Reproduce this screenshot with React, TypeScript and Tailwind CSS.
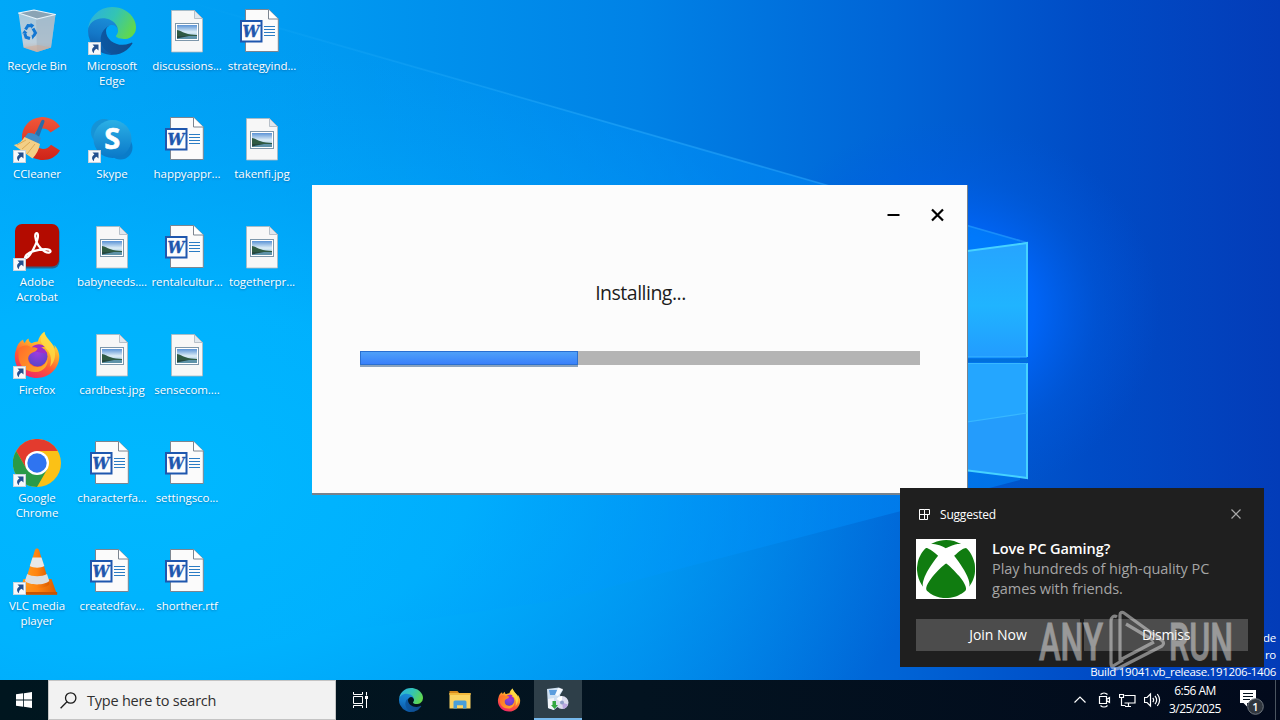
import type { ReactNode } from 'react';
import { FaXbox } from 'react-icons/fa';

type IconKind =
    | 'recycle' | 'edge' | 'image' | 'word' | 'ccleaner' | 'skype'
    | 'acrobat' | 'firefox' | 'chrome' | 'vlc';

interface Shortcut {
    label: string;
    icon: IconKind;
    link?: boolean;
}

const COLUMNS: Shortcut[][] = [
    [
        { label: 'Recycle Bin', icon: 'recycle' },
        { label: 'CCleaner', icon: 'ccleaner', link: true },
        { label: 'Adobe Acrobat', icon: 'acrobat', link: true },
        { label: 'Firefox', icon: 'firefox', link: true },
        { label: 'Google Chrome', icon: 'chrome', link: true },
        { label: 'VLC media player', icon: 'vlc', link: true },
    ],
    [
        { label: 'Microsoft Edge', icon: 'edge', link: true },
        { label: 'Skype', icon: 'skype', link: true },
        { label: 'babyneeds....', icon: 'image' },
        { label: 'cardbest.jpg', icon: 'image' },
        { label: 'characterfa...', icon: 'word' },
        { label: 'createdfav...', icon: 'word' },
    ],
    [
        { label: 'discussions...', icon: 'image' },
        { label: 'happyappr...', icon: 'word' },
        { label: 'rentalcultur...', icon: 'word' },
        { label: 'sensecom....', icon: 'image' },
        { label: 'settingsco...', icon: 'word' },
        { label: 'shorther.rtf', icon: 'word' },
    ],
    [
        { label: 'strategyind...', icon: 'word' },
        { label: 'takenfi.jpg', icon: 'image' },
        { label: 'togetherpr...', icon: 'image' },
    ],
];

/* ---------- Icons ---------- */

/** Gradients shared by every icon on the page */
function SharedDefs() {
    return (
        <svg width="0" height="0" className="absolute">
            <defs>
                <linearGradient id="edgeA" x1="0" y1="0" x2="1" y2="0">
                    <stop offset="0" stopColor="#0c59a4" />
                    <stop offset="1" stopColor="#114a8b" />
                </linearGradient>
                <linearGradient id="edgeB" x1="0.6" y1="0" x2="0.4" y2="1">
                    <stop offset="0" stopColor="#1b8fd8" />
                    <stop offset="0.5" stopColor="#1478c8" />
                    <stop offset="1" stopColor="#0b55a2" />
                </linearGradient>
                <linearGradient id="edgeC" x1="0" y1="0.2" x2="1" y2="0.6">
                    <stop offset="0" stopColor="#2bb0e0" />
                    <stop offset="0.5" stopColor="#33c4b4" />
                    <stop offset="1" stopColor="#62d84a" />
                </linearGradient>
                <linearGradient id="ffBody" x1="0.8" y1="0" x2="0.3" y2="1">
                    <stop offset="0" stopColor="#fff44f" />
                    <stop offset="0.35" stopColor="#ffb02a" />
                    <stop offset="0.65" stopColor="#ff5a36" />
                    <stop offset="1" stopColor="#f0246a" />
                </linearGradient>
                <radialGradient id="ffGlobe" cx="0.5" cy="0.3" r="0.7">
                    <stop offset="0" stopColor="#a03be0" />
                    <stop offset="1" stopColor="#5a45c8" />
                </radialGradient>
                <linearGradient id="ffHead" x1="0" y1="0" x2="1" y2="0.6">
                    <stop offset="0" stopColor="#ff6a2a" />
                    <stop offset="1" stopColor="#ffa928" />
                </linearGradient>
                <linearGradient id="skypeBg" x1="0" y1="0" x2="0" y2="1">
                    <stop offset="0" stopColor="#2bb0e6" />
                    <stop offset="1" stopColor="#0a78c8" />
                </linearGradient>
                <linearGradient id="ccRed" x1="0" y1="0" x2="0" y2="1">
                    <stop offset="0" stopColor="#f0573a" />
                    <stop offset="1" stopColor="#cf2318" />
                </linearGradient>
                <linearGradient id="binBody" x1="0" y1="0" x2="0" y2="1">
                    <stop offset="0" stopColor="#b4cbd9" />
                    <stop offset="0.75" stopColor="#cfd3d9" />
                    <stop offset="1" stopColor="#d6b8a9" />
                </linearGradient>
                <linearGradient id="photo" x1="0" y1="0" x2="0" y2="1">
                    <stop offset="0" stopColor="#5b93d6" />
                    <stop offset="0.5" stopColor="#dcedf6" />
                    <stop offset="1" stopColor="#7fb0cf" />
                </linearGradient>
                <linearGradient id="cone" x1="0" y1="0" x2="1" y2="0">
                    <stop offset="0" stopColor="#ff9a1e" />
                    <stop offset="0.5" stopColor="#ff8410" />
                    <stop offset="1" stopColor="#dc5c00" />
                </linearGradient>
            </defs>
        </svg>
    );
}

function EdgeIcon({ size = 48 }: { size?: number }) {
    return (
        <svg width={size} height={size} viewBox="0 0 256 256">
            <g transform="translate(-4.63 -4.92)">
                <path fill="url(#edgeA)" d="M235.68 195.46a93.73 93.73 0 0 1-10.54 4.71 101.87 101.87 0 0 1-35.9 6.46c-47.32 0-88.54-32.55-88.54-74.32A31.48 31.48 0 0 1 117.13 105c-42.8 1.8-53.8 46.4-53.8 72.53 0 73.88 68.09 81.37 82.76 81.37 7.91 0 19.84-2.3 27-4.56l1.31-.44a128.34 128.34 0 0 0 66.6-52.8 4 4 0 0 0-5.32-5.64Z" />
                <path fill="url(#edgeB)" d="M110.34 246.34A79.2 79.2 0 0 1 87.6 225a80.72 80.72 0 0 1 29.53-120c3.12-1.47 8.45-4.13 15.54-4a32.35 32.35 0 0 1 25.69 13 31.88 31.88 0 0 1 6.36 18.66c0-.21 24.46-79.6-80-79.6-43.9 0-80 41.66-80 78.21a130.15 130.15 0 0 0 12.11 56 128 128 0 0 0 156.38 67.11 75.55 75.55 0 0 1-62.78-8Z" />
                <path fill="url(#edgeC)" d="M156.94 153.78c-.81 1.05-3.3 2.5-3.3 5.66 0 2.61 1.7 5.12 4.72 7.23 14.38 10 41.49 8.68 41.56 8.68a59.56 59.56 0 0 0 30.27-8.35 61.38 61.38 0 0 0 30.43-52.88c.26-22.41-8-37.31-11.34-43.91-21.19-41.45-66.93-65.29-116.67-65.29a128 128 0 0 0-128 126.2c.48-36.54 36.8-66.05 80-66.05 3.5 0 23.46.34 42 10.07 16.34 8.58 24.9 18.94 30.85 29.21 6.18 10.67 7.28 24.15 7.28 29.52s-2.74 13.33-7.8 19.91Z" />
            </g>
        </svg>
    );
}

function FirefoxIcon({ size = 48 }: { size?: number }) {
    return (
        <svg width={size} height={size} viewBox="0 0 48 48">
            <path fill="url(#ffBody)" d="M46 23c-.8-4.300-2.800-7.300-5-9.300.6 1.500 1 3 1.100 4C40 12.500 36 10.300 33.500 6.200 32.200 4 31.600 2.800 31.400.8c-3.600 2.200-5.900 6.500-6.500 9.800-2.200.1-4.200.7-6 1.600-1.700-.2-3.400-1.700-3.300-4.600-1.900 1-3 2.400-3.700 4.300-1.200-.8-1.800-2-1.800-3.300C6 11 3.700 15 3 19c-.7 1.900-1.200 4.200-1.200 6.500C1.800 37.800 11.600 47 24 47s22.300-9.700 22.300-21.700c0-.8-.1-1.500-.3-2.300Z" />
            <circle cx="24.500" cy="25.500" r="10" fill="url(#ffGlobe)" />
            <path fill="#a22cc6" d="M19 16c4-3.500 10-3.700 13.500.3-2-.6-3.500-.4-4.600.4 3 .9 5.300 3 6.300 6L19 20Z" />
            <path fill="url(#ffHead)" d="M5.500 17.500c4.500-3.800 9.500-3.800 12.500-1.100 2.400-.5 4.800 0 6.700 1.200-1 2.800-3.800 3.200-6.700 5-1.700 1.100-2.800 3-2.800 5.200 0 5.500 5 8.400 9.500 8.200 5.800-.2 9.300-4.500 9.600-9 1.900 6.700-3.300 14-12 14-9.800 0-16.500-6.500-16.800-15.500-.1-3 0-5.500 0-8Z" />
            <path fill="#ffdc45" opacity=".8" d="M31.400.8c.8 6 7.800 9.500 10 17.500 2 7.600-.8 14-4.400 17.500 2-6.500 1.200-12.700-3.200-17.600-3.600-3.900-6.300-6.200-6-9.700.3-3 2-5.800 3.600-7.700Z" />
        </svg>
    );
}

function WordIcon() {
    return (
        <svg width="48" height="48" viewBox="0 0 48 48">
            <path d="M7.500 2.500h23.300l9.500 9.500v32.500H7.500Z" fill="#fbfbfb" stroke="#7c8590" />
            <path d="M30.500 2.500v9.500h9.800" fill="#fff" stroke="#7c8590" />
            <path d="M26 19.500h11M26 22.500h11M26 25.500h11M26 28.500h11" stroke="#2b7cc4" />
            <rect x="3" y="14" width="20.500" height="20.500" fill="#fdfdfd" stroke="#1f57ae" strokeWidth="2" />
            <text x="13" y="30.300" textAnchor="middle" textLength="17" lengthAdjust="spacingAndGlyphs" fill="#1f57ae" stroke="#1f57ae" strokeWidth=".4" fontFamily="'DejaVu Serif', serif" fontWeight="700" fontStyle="italic" fontSize="17">W</text>
        </svg>
    );
}

function ImageIcon() {
    return (
        <svg width="48" height="48" viewBox="0 0 48 48">
            <path d="M8.500 3.500h23l8 8v33.500h-31Z" fill="#f7f7f7" stroke="#b3b8bd" strokeWidth=".8" />
            <path d="M31.500 3.500v8h8Z" fill="#dfe7ee" stroke="#a9b4be" strokeWidth=".8" />
            <rect x="12.500" y="16.500" width="23" height="17" fill="#fff" stroke="#7d97ab" />
            <rect x="14" y="18" width="20" height="14" fill="url(#photo)" />
            <path d="M14 23c3 .5 5 2 8 3 4 1.500 8 1.600 12 2v1H14Z" fill="#2f5a43" />
            <path d="M14 29h20v3H14Z" fill="#5f93a9" />
            <path d="M14 29h12l-12 2.500Z" fill="#26483f" />
        </svg>
    );
}

function RecycleIcon() {
    return (
        <svg width="48" height="48" viewBox="0 0 48 48">
            <path d="M5.500 6 23 11.500 42.500 7.500 38 40.500 24 45 10.500 40.500Z" fill="url(#binBody)" opacity=".92" />
            <path d="M23 11.500 42.500 7.500 38 40.500 24 45Z" fill="#9fb1bf" opacity=".55" />
            <path d="M5.500 6 21 3l21.500 4.500L24 12Z" fill="#8aa4b5" stroke="#eaf4fa" strokeWidth="1.200" strokeLinejoin="round" />
            <path d="M10.500 40.500 24 45l14-4.500-13-2.500Z" fill="#cfa996" opacity=".5" />
            <g fill="none" stroke="#1377d2" strokeWidth="3">
                <path d="m12.500 22.500 2.500-4 3.500.3" />
                <path d="m20 21.500 2.500 4.500-2 3" />
                <path d="m17 31.500-4-1.200-1.300-4" />
            </g>
            <path fill="#1377d2" d="m17.500 16 3.800 2.300-3 3.500ZM22.500 28l-4 .3 1 4.200ZM9 26.500l2.500-3.500 3 3Z" />
        </svg>
    );
}

function CCleanerIcon() {
    return (
        <svg width="48" height="48" viewBox="0 0 48 48">
            <path d="M47 11.500C42.500 5 35 1.500 27.500 2.200 16.500 3 8.500 12 9 23.500 9.500 36 18.500 45 30 45c7 0 13-3 17-9.500l-9-5.800c-2 2.800-4.700 4.200-8 4.200-5.500 0-9-4.300-9-10.300 0-6 3.600-10.200 8.800-10.200 3.300 0 5.900 1.400 7.700 4Z" fill="url(#ccRed)" />
            <path d="M28.500 5.500c1-1.400 3.300-.6 3 1.200l-6.500 18-4.500-2Z" fill="#2b6ca8" />
            <path d="M15 18c4-.5 9 1.500 13 5l-2.500 6-14-6.500Z" fill="#3d8cc9" />
            <path d="M11.500 22 27 29c-1 5.500-3.500 10.500-7.500 14.500L.8 30c5-1 8.500-4 10.700-8Z" fill="#f3cf86" />
            <path d="m4 30 9-5M9 34l8-7M14 39l8-10" stroke="#dba955" fill="none" />
        </svg>
    );
}

function SkypeIcon() {
    return (
        <svg width="48" height="48" viewBox="0 0 48 48">
            <circle cx="16" cy="17" r="13" fill="#1693d6" />
            <circle cx="32.500" cy="32.500" r="12" fill="#0a7cc9" />
            <circle cx="24.500" cy="24" r="19" fill="url(#skypeBg)" />
            <text x="24.300" y="33.500" textAnchor="middle" fill="#fff" stroke="#fff" strokeWidth=".6" fontFamily="'Open Sans', sans-serif" fontWeight="700" fontSize="29">S</text>
        </svg>
    );
}

function AcrobatIcon() {
    return (
        <svg width="48" height="48" viewBox="0 0 48 48">
            <rect x="2.500" y="2.500" width="44" height="43" rx="7" fill="#5c0a08" opacity=".45" />
            <rect x="2" y="1" width="44" height="42.500" rx="7" fill="#b30b00" />
            <path
                d="M12 34.500c1-3.500 7-6.500 14-7.700 6-1 11-.5 11.500 1.200.4 1.700-2.500 2.300-5.500.8-4.500-2.200-9.500-9-9.800-15.300-.1-4.200 2.800-4.500 2.800-.8 0 4.500-4.500 14.500-8.300 19.300-2.200 2.800-5.200 4.500-4.700 2.500Z"
                fill="none"
                stroke="#fff"
                strokeWidth="2.200"
                strokeLinejoin="round"
            />
        </svg>
    );
}

function ChromeIcon() {
    return (
        <svg width="48" height="48" viewBox="0 0 48 48">
            <circle cx="24" cy="24" r="24" fill="#fbc116" />
            <path d="M24 12h20.800A24 24 0 0 0 3.200 12l10.400 18Z" fill="#e33b2e" />
            <path d="M3.200 12A24 24 0 0 0 24 48l10.400-18L24 36 13.600 30Z" fill="#2a9a48" />
            <circle cx="24" cy="24" r="12" fill="#fff" />
            <circle cx="24" cy="24" r="9.700" fill="#2f74f0" />
        </svg>
    );
}

function VlcIcon() {
    return (
        <svg width="48" height="48" viewBox="0 0 48 48">
            <path d="M10.500 32h28l5.500 15.500H5.500Z" fill="url(#cone)" />
            <path d="M5.500 45h38.700v2.800H5.500Z" fill="#c95300" />
            <path d="M21.800 3.500c.8-2.600 3.600-2.600 4.400 0L36.500 37c-3 5.500-22 5.500-25 0Z" fill="url(#cone)" />
            <path d="M19.500 10.500h9l2.800 8.500c-3.500 2.300-11 2.300-14.500 0Z" fill="#e8e8e8" />
            <path d="M14.200 27c5 3 14.800 3 19.800 0l2.300 7c-4.500 4.500-20.200 4.500-24.400 0Z" fill="#dedede" />
        </svg>
    );
}

const ICONS: Record<IconKind, () => ReactNode> = {
    recycle: RecycleIcon,
    edge: EdgeIcon,
    image: ImageIcon,
    word: WordIcon,
    ccleaner: CCleanerIcon,
    skype: SkypeIcon,
    acrobat: AcrobatIcon,
    firefox: FirefoxIcon,
    chrome: ChromeIcon,
    vlc: VlcIcon,
};

/* ---------- Desktop ---------- */

function Wallpaper() {
    return (
        <svg className="absolute inset-0" width="1280" height="720" viewBox="0 0 1280 720">
            <defs>
                <linearGradient id="sky" gradientUnits="userSpaceOnUse" x1="0" y1="0" x2="1280" y2="0">
                    <stop offset="0" stopColor="#00a8f8" />
                    <stop offset="0.22" stopColor="#009cf2" />
                    <stop offset="0.5" stopColor="#0082e6" />
                    <stop offset="0.7" stopColor="#0064d6" />
                    <stop offset="0.85" stopColor="#004cc6" />
                    <stop offset="1" stopColor="#033cb8" />
                </linearGradient>
                <radialGradient id="leftGlow" gradientUnits="userSpaceOnUse" cx="0" cy="0" r="1" gradientTransform="translate(150 480) scale(800 440)">
                    <stop offset="0" stopColor="#00b8ff" />
                    <stop offset="0.4" stopColor="#00b4ff" stopOpacity="0.9" />
                    <stop offset="1" stopColor="#00a4fa" stopOpacity="0" />
                </radialGradient>
                <radialGradient id="logoGlow" gradientUnits="userSpaceOnUse" cx="0" cy="0" r="1" gradientTransform="translate(950 310) scale(210 190)">
                    <stop offset="0" stopColor="#0078ff" />
                    <stop offset="0.4" stopColor="#0068ff" stopOpacity="0.85" />
                    <stop offset="0.7" stopColor="#005ee8" stopOpacity="0.35" />
                    <stop offset="1" stopColor="#0058e0" stopOpacity="0" />
                </radialGradient>
                <linearGradient id="beam" x1="0" y1="0" x2="1" y2="0">
                    <stop offset="0" stopColor="#3cc0ff" stopOpacity="0" />
                    <stop offset="0.5" stopColor="#3cb8ff" stopOpacity="0.35" />
                    <stop offset="1" stopColor="#3caeff" stopOpacity="0.4" />
                </linearGradient>
                <linearGradient id="under" gradientUnits="userSpaceOnUse" x1="250" y1="0" x2="980" y2="0">
                    <stop offset="0" stopColor="#00a8ff" stopOpacity="0" />
                    <stop offset="0.6" stopColor="#0096ff" stopOpacity="0.35" />
                    <stop offset="1" stopColor="#008cff" stopOpacity="0.5" />
                </linearGradient>
                <linearGradient id="pane" x1="0" y1="0" x2="0" y2="1">
                    <stop offset="0" stopColor="#26a4ff" />
                    <stop offset="0.55" stopColor="#20b4ff" />
                    <stop offset="1" stopColor="#229cff" />
                </linearGradient>
            </defs>
            <rect width="1280" height="720" fill="url(#sky)" />
            <rect width="1280" height="720" fill="url(#leftGlow)" />
            <rect width="1280" height="720" fill="url(#logoGlow)" />
            <path d="M181 0 1020 240v240L560 600 0 680V0Z" fill="url(#under)" />
            <path d="M181 0 1028 243" stroke="url(#beam)" strokeWidth="1.800" />
            <path d="M900 260 1027 243v114H900Z" fill="url(#pane)" />
            <path d="M900 363h127v115L900 462Z" fill="#249cfc" />
            <path d="M900 363h127v50L900 432Z" fill="#24a6ff" />
            <path d="M900 260 1027 243v114M1027 363v115L900 462" fill="none" stroke="#46d2ff" strokeWidth="2" />
            <path d="M900 357h127M900 363.500h127M900 432l127-19" fill="none" stroke="#38b8ff" strokeWidth="1.200" />
            <path d="M900 358.500h128v4H900Z" fill="#0070dc" />
        </svg>
    );
}

function DesktopShortcut({ label, icon, link }: Shortcut) {
    const Icon = ICONS[icon];
    return (
        <div className="mr-px flex h-[108px] w-[74px] flex-col items-center pt-[7px]">
            <div className="relative size-12">
                <Icon />
                {link && (
                    <svg className="absolute bottom-0 left-0" width="13" height="13" viewBox="0 0 13 13">
                        <rect x=".5" y=".5" width="12" height="12" fill="#f7f9fb" stroke="#c9d3dc" />
                        <path d="M4.500 2.500h6v6L8.600 6.700C6.600 7.600 5.800 9 5.900 11.200 3.400 9 3.500 6.200 6.400 4.400Z" fill="#24508f" />
                    </svg>
                )}
            </div>
            <span className="mt-[3px] w-[74px] text-center text-[11.5px] leading-[15px] tracking-[-0.05px] text-white [text-shadow:0_1px_2px_rgba(0,40,90,0.4)]">
                {label}
            </span>
        </div>
    );
}

function InstallerWindow() {
    return (
        <section className="absolute top-[185px] left-[312px] flex h-[310px] w-[656px] flex-col border-r border-b-2 border-[#78828c] bg-[#fcfcfc]">
            <div className="flex justify-end gap-[31px] pt-[23px] pr-[23px]">
                <svg width="13" height="14" viewBox="0 0 13 14">
                    <path d="M.5 7h12" stroke="#000" strokeWidth="2" />
                </svg>
                <svg width="13" height="14" viewBox="0 0 13 14">
                    <path d="m1 1.500 11 11M12 1.500l-11 11" stroke="#000" strokeWidth="2.200" />
                </svg>
            </div>
            <h1 className="mt-[55px] pl-[2px] text-center text-[19.5px] leading-8 tracking-[-0.5px] text-[#1c1c1c]">Installing...</h1>
            <div className="mt-[42px] mr-[47px] ml-12 h-[14px] bg-[#b4b4b4]">
                <div className="h-4 w-[218px] border-b-2 border-[#8ba3bd]">
                    <div className="h-[14px] border border-[#2a6fd0] bg-linear-to-b from-[#4fa0f8] to-[#3a80fb]" />
                </div>
            </div>
        </section>
    );
}

function Toast() {
    return (
        <aside className="absolute top-[488px] left-[900px] flex h-[179px] w-[364px] flex-col bg-[#1f1f1f] px-4 text-white">
            <div className="flex h-[51px] items-center pt-[3px] pl-[3px]">
                <svg width="12" height="12" viewBox="0 0 12 12" fill="none" stroke="#fff">
                    <path d="M.5.500h5v10h-5ZM.5 5.500h10v-5h-5M5.500 10.500h3v-5" />
                </svg>
                <span className="ml-[9px] grow text-[12px] tracking-[-0.2px]">Suggested</span>
                <svg className="mr-[7px] mb-[2px]" width="10" height="10" viewBox="0 0 10 10">
                    <path d="m.5.500 9 9M9.500.500l-9 9" stroke="#a8a8a8" strokeWidth="1.200" />
                </svg>
            </div>
            <div className="flex gap-4">
                <div className="flex size-[60px] items-center justify-center bg-white">
                    <FaXbox size={60} color="#107c10" />
                </div>
                <div className="text-[14.500px] leading-5 tracking-[-0.06px]">
                    <p className="font-semibold">Love PC Gaming?</p>
                    <p className="text-[#a5a5a5]">
                        Play hundreds of high-quality PC
                        <br />
                        games with friends.
                    </p>
                </div>
            </div>
            <div className="mt-5 flex gap-1 text-center text-[14px] leading-8">
                <div className="flex-1 bg-[#4c4c4c]">Join Now</div>
                <div className="flex-1 bg-[#4c4c4c] tracking-[-0.3px]">Dismiss</div>
            </div>
        </aside>
    );
}

function Watermark() {
    return (
        <svg className="absolute top-[606px] left-[1036px] opacity-50" width="200" height="68" viewBox="0 0 200 68">
            <g fill="#e6e6e6" stroke="#e6e6e6" strokeWidth=".8" fontFamily="Roboto, sans-serif" fontSize="51.500" fontWeight="500">
                <text x="3" y="53.500" textLength="64" lengthAdjust="spacingAndGlyphs">ANY</text>
                <text x="133" y="53.500" textLength="64" lengthAdjust="spacingAndGlyphs">RUN</text>
            </g>
            <path
                d="M81 11c-3-2-6 0-6 4v42c0 5 4 7 8 5l43-22c2-1.500 2-4 0-5.500L88 7c-2-1.500-4-.5-4 2v45l34-18M90 18l27 16M77 60l10-6"
                fill="none"
                stroke="#e6e6e6"
                strokeWidth="3.200"
                strokeLinejoin="round"
            />
        </svg>
    );
}

/* ---------- Taskbar ---------- */

function TrayIcons() {
    return (
        <div className="flex items-center gap-[8px] text-white">
            <svg width="12" height="14" viewBox="0 0 12 14" fill="none" stroke="currentColor">
                <path d="m.5 9.500 5.500-5.500 5.500 5.500" strokeWidth="1.200" />
            </svg>
            <svg className="ml-1" width="13" height="18" viewBox="0 0 13 18" fill="none" stroke="currentColor">
                <path d="M2.500 3.500c2-2 5-2 7 0M2.500 14.500c2 2 5 2 7 0M1.500 5.500h7v7h-7ZM8.500 8.500l3-2v5l-3-2" strokeWidth="1.200" />
            </svg>
            <svg width="17" height="16" viewBox="0 0 17 16" fill="none" stroke="currentColor">
                <path d="M5.500 3.500h10.500v7.500H5.500M.5 2.500h4v3h-4ZM2.500 5.500v8h4M9.500 11v3M6 14.500h6" strokeWidth="1.200" />
            </svg>
            <svg width="17" height="16" viewBox="0 0 17 16" fill="none" stroke="currentColor">
                <path d="M.5 5.500H3L6.500 2v12L3 10.500H.5ZM8.800 5.800q1.700 2.200 0 4.400M11 3.800q3.300 4.200 0 8.400M13.300 2q4.600 6 0 12" strokeWidth="1.200" />
            </svg>
        </div>
    );
}

function Taskbar() {
    return (
        <footer className="absolute bottom-0 left-0 flex h-10 w-full items-stretch bg-linear-to-r from-[#00161f] via-[#031320] to-[#020a1c]">
            <div className="flex w-12 items-center justify-center">
                <svg width="16" height="16" viewBox="0 0 16 16" fill="#fff">
                    <path d="M0 2.300 7.200 1.300v6.300H0ZM8 1.200 16 0v7.600H8ZM0 8.400h7.200v6.300L0 13.700ZM8 8.400h8V16l-8-1.200Z" />
                </svg>
            </div>
            <div className="flex w-72 items-center border border-[#c4c4c4] bg-[#f2f2f2] pl-[11px]">
                <svg width="17" height="17" viewBox="0 0 17 17" fill="none" stroke="#1b1b1b" strokeWidth="1.300">
                    <circle cx="10.700" cy="6" r="5.200" />
                    <path d="M7 9.800.6 16.200" />
                </svg>
                <span className="mt-px ml-[10px] text-[14.500px] tracking-[-0.22px] text-[#303030]">Type here to search</span>
            </div>
            <div className="flex w-[50px] items-center justify-center pr-[2px]">
                <svg width="17" height="16" viewBox="0 0 17 16" fill="none" stroke="#fff">
                    <path d="M1.500 0v2.500h9V0M1.500 4.500h9v7h-9ZM1.500 16v-2.500h9V16M14.500 0v3.500M14.500 7v9" />
                    <path d="M13 4h3v3h-3Z" fill="#fff" stroke="none" />
                </svg>
            </div>
            <div className="flex w-[49px] items-center justify-center">
                <EdgeIcon size={24} />
            </div>
            <div className="flex w-[49px] items-center justify-center">
                <svg width="24" height="24" viewBox="0 0 24 24">
                    <path d="M1.500 3h8l2 2.500h-10Z" fill="#d88a1c" />
                    <path d="M1.500 5h21v15.500h-21Z" fill="#fcd462" />
                    <path d="M1.500 5h21v2h-21Z" fill="#f3b93c" />
                    <path d="M5.500 20.500V14q0-1.500 1.500-1.500h10q1.500 0 1.500 1.500v6.500h-3.500v-3.200H9v3.200Z" fill="#4a9fd8" />
                </svg>
            </div>
            <div className="flex w-[50px] items-center justify-center">
                <FirefoxIcon size={24} />
            </div>
            <div className="flex w-12 items-center justify-center border-b-2 border-[#76b9ed] bg-[#2e3f49]">
                <svg width="26" height="24" viewBox="0 0 26 24">
                    <path d="m2 2 12-1.500L18 3l-3 5 2 8-8 7-6-2Z" fill="#cfe0f2" />
                    <path d="m3 12 6-1v12L3 21Z" fill="#f2f5fa" />
                    <path d="M4 3h10l-2 5H5Z" fill="#5c9ddd" />
                    <path d="m13 1 5 1-5 7-3-1Z" fill="#f8fbff" />
                    <circle cx="17" cy="15.500" r="6.500" fill="#dcdcee" />
                    <path d="M17 15.500 11.500 12A7 7 0 0 1 17 9Z" fill="#fff" />
                    <path d="m17 15.500 6 2A6.500 6.500 0 0 1 18 22Z" fill="#b9a5df" />
                    <circle cx="17" cy="15.500" r="2" fill="#8d9dc8" />
                    <path d="M7.500 14H11v4h2l-3.500 4L6 18h1.500Z" fill="#33a840" />
                </svg>
            </div>
            <div className="ml-auto flex items-center">
                <TrayIcons />
                <div className="ml-[5px] w-[58px] text-center text-[12px] leading-[18px] tracking-[-0.55px] whitespace-nowrap text-white">
                    <div>6:56 AM</div>
                    <div>3/25/2025</div>
                </div>
                <svg className="mt-1 ml-[15px]" width="26" height="28" viewBox="0 0 26 28">
                    <path d="M1 2h16v13H8v3.500L4.500 15H1Z" fill="#fff" />
                    <path d="M4 5.500h10M4 8.500h10M4 11.500h7" stroke="#02101c" />
                    <circle cx="16.500" cy="18.500" r="7.800" fill="#30363e" stroke="#717880" />
                    <text x="16.500" y="22.500" textAnchor="middle" fill="#fff" fontFamily="'Open Sans', sans-serif" fontWeight="600" fontSize="11">1</text>
                </svg>
                <div className="ml-[10px] h-10 w-[5px] border-l border-[#4b5560]" />
            </div>
        </footer>
    );
}

export default function App() {
    return (
        <main className="relative h-[720px] w-[1280px] overflow-hidden font-['Open_Sans','Noto_Sans',sans-serif] select-none">
            <SharedDefs />
            <Wallpaper />
            <div className="relative flex">
                {COLUMNS.map((column, index) => (
                    <div key={index} className="flex flex-col">
                        {column.map((item) => (
                            <DesktopShortcut key={item.label} {...item} />
                        ))}
                    </div>
                ))}
            </div>
            <div className="absolute right-1 bottom-10 text-right text-[11.500px] leading-[17px] tracking-[-0.28px] text-white">
                <div>de</div>
                <div>ro</div>
                <div>Build 19041.vb_release.191206-1406</div>
            </div>
            <InstallerWindow />
            <Toast />
            <Watermark />
            <Taskbar />
        </main>
    );
}
